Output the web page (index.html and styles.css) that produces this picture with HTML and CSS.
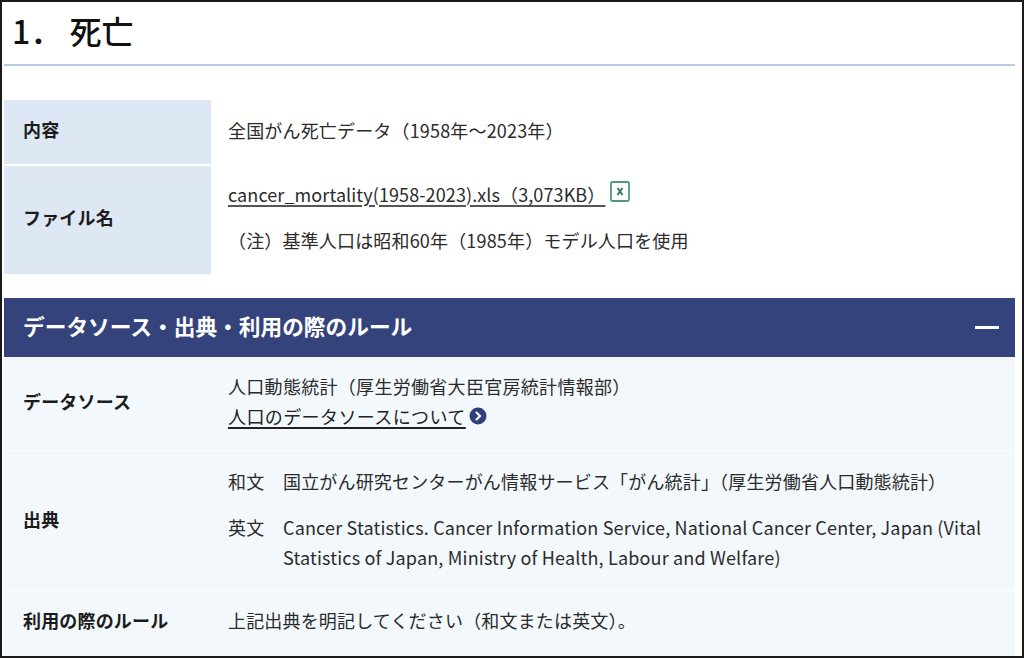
FILE: index.html
```html
<!DOCTYPE html>
<html lang="ja">
<head>
<meta charset="utf-8">
<title>1．死亡</title>
<link rel="stylesheet" href="styles.css">
</head>
<body>
<div class="frame">
  <h1 class="title">1． 死亡</h1>
  <div class="info">
    <div class="info-row row-content">
      <div class="info-label">内容</div>
      <div class="info-value">全国がん死亡データ（1958年～2023年）</div>
    </div>
    <div class="info-row row-file">
      <div class="info-label file-label">ファイル名</div>
      <div class="info-value file-value">
        <p class="file-line"><a class="link link-file" href="#">cancer_mortality(1958-2023).xls（3,073KB）</a><svg class="xls" width="20" height="21" viewBox="0 0 20 21"><rect x="1" y="1" width="18" height="19" rx="1.5" fill="#fff" stroke="#4e9a7c" stroke-width="1.8"/><path d="M7.5 7l5 7M12.5 7l-5 7" stroke="#2f7f5b" stroke-width="2" fill="none"/></svg></p>
        <p class="note">（注）基準人口は昭和60年（1985年）モデル人口を使用</p>
      </div>
    </div>
  </div>
  <section class="panel">
    <div class="panel-head">
      <h2 class="panel-title">データソース・出典・利用の際のルール</h2>
      <span class="minus"></span>
    </div>
    <div class="panel-row row-source">
      <div class="panel-label">データソース</div>
      <div class="panel-value value-source">
        <div>人口動態統計（厚生労働省大臣官房統計情報部）</div>
        <div class="more"><a class="link link-dark" href="#">人口のデータソースについて</a><svg class="arrow" width="18" height="18" viewBox="0 0 18 18"><circle cx="9" cy="9" r="8.5" fill="#2f4080"/><path d="M7 5l4 4-4 4" fill="none" stroke="#fff" stroke-width="2.2"/></svg></div>
      </div>
    </div>
    <div class="panel-row row-cite">
      <div class="panel-label">出典</div>
      <div class="panel-value cite">
        <div class="cite-line"><span class="cite-lang">和文</span><span>国立がん研究センターがん情報サービス「がん統計」（厚生労働省人口動態統計）</span></div>
        <div class="cite-line"><span class="cite-lang">英文</span><span class="cite-en">Cancer Statistics. Cancer Information Service, National Cancer Center, Japan (Vital Statistics of Japan, Ministry of Health, Labour and Welfare)</span></div>
      </div>
    </div>
    <div class="panel-row row-rule">
      <div class="panel-label">利用の際のルール</div>
      <div class="panel-value">上記出典を明記してください（和文または英文）。</div>
    </div>
  </section>
</div>
</body>
</html>
```
FILE: styles.css
```css
* { box-sizing: border-box; }
html, body { margin: 0; padding: 0; }
body {
  width: 1024px;
  height: 658px;
  overflow: hidden;
  background: #fff;
  color: #2b2b2b;
  font-family: "Noto Sans CJK JP", "Noto Sans", sans-serif;
  font-size: 18px;
  letter-spacing: 0.17px;
}
.frame {
  height: 658px;
  border: 2px solid #1a1a1a;
  padding: 0 7px 0 2px;
  overflow: hidden;
}
.title {
  margin: 0;
  height: 64px;
  padding: 6px 0 0 8px;
  font-size: 32px;
  font-weight: 500;
  line-height: 44px;
  letter-spacing: 0;
  color: #111;
  border-bottom: 2px solid #b8cae3;
}
.info { margin-top: 34px; display: flex; flex-direction: column; gap: 2px; }
.info-row { display: flex; }
.row-content { height: 64px; }
.row-file { height: 108px; }
.info-label {
  width: 207px;
  padding: 0 0 6px 19px;
  background: #dee8f5;
  display: flex;
  align-items: center;
  font-weight: 700;
  color: #1c1c1c;
}
.file-label { padding-bottom: 6px; }
.info-value { padding: 0 0 4px 17px; display: flex; align-items: center; }
.file-value { display: block; padding-bottom: 0; }
.file-value p { margin: 0; }
.file-line { display: flex; align-items: flex-start; padding-top: 13px; line-height: 30px; }
.note { margin-top: 16px !important; line-height: 30px; }
.link {
  color: #2b2b2b;
  text-decoration: underline;
  text-decoration-color: #555;
  text-decoration-thickness: 2px;
  text-underline-offset: 3px;
}
.link-file { letter-spacing: 0.1px; }
.link-dark { color: #222; text-decoration-color: #222; letter-spacing: 0.4px; }
.xls { margin: 2px 0 0 5px; }
.panel { margin-top: 24px; background: #f3f8fc; }
.panel-head {
  height: 59px;
  background: #34437c;
  display: flex;
  align-items: center;
  justify-content: space-between;
  padding: 0 16px 5px 19px;
}
.panel-title { margin: 0; color: #fff; font-size: 21.7px; font-weight: 700; letter-spacing: 0; }
.minus { width: 24px; height: 3px; background: #fff; margin-top: 5px; }
.panel-row { display: flex; align-items: center; border-bottom: 1px solid #fff; }
.row-source { height: 94px; padding-bottom: 6px; }
.row-cite { height: 140px; padding-bottom: 4px; }
.row-rule { height: 66px; border-bottom: 0; padding-bottom: 8px; }
.panel-label { width: 224px; padding-left: 19px; font-weight: 700; color: #1c1c1c; flex: none; }
.panel-value { flex: 1; line-height: 30px; }
.value-source { letter-spacing: 0.3px; }
.more { display: flex; align-items: center; }
.arrow { margin-left: 3px; }
.cite { display: flex; flex-direction: column; gap: 16px; }
.cite-line { display: flex; }
.cite-lang { width: 55px; flex: none; }
.cite-en { padding-right: 24px; }
```
